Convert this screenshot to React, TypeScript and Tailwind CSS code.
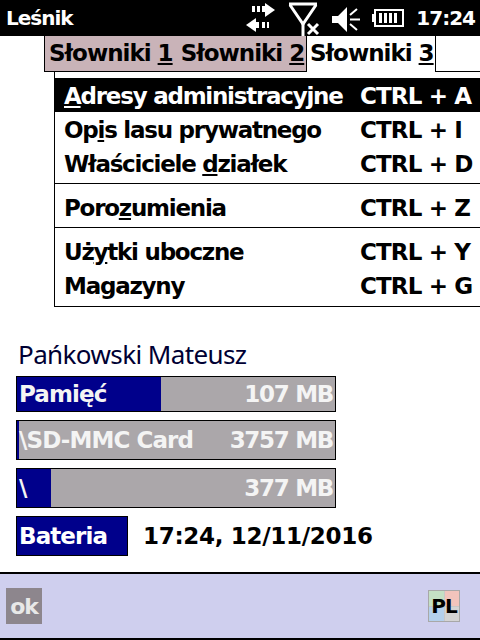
import React from 'react';

const font = { fontFamily: '"DejaVu Sans", sans-serif' };

const menu = [
  [
    { pre: '', key: 'A', post: 'dresy administracyjne', hot: 'A', active: true },
    { pre: 'Op', key: 'i', post: 's lasu prywatnego', hot: 'I' },
    { pre: 'Właściciele ', key: 'd', post: 'ziałek', hot: 'D' },
  ],
  [{ pre: 'Poro', key: 'z', post: 'umienia', hot: 'Z' }],
  [
    { pre: 'Uż', key: 'y', post: 'tki uboczne', hot: 'Y' },
    { pre: 'Ma', key: 'g', post: 'azyny', hot: 'G' },
  ],
];

const bars = [
  { label: 'Pamięć', value: '107 MB', fill: 'w-[144px]', height: 'h-[36px]' },
  { label: '\\SD-MMC Card', value: '3757 MB', fill: 'w-[2px]', height: 'h-[40px]' },
  { label: '\\', value: '377 MB', fill: 'w-[34px]', height: 'h-[40px]' },
];

const StatusIcons: React.FC = () => (
  <div className="flex items-start">
    <svg width="32" height="32" viewBox="0 0 32 32" className="mt-[2px] mr-[10px]" fill="#fff">
      <path d="M7 5h3v6H7zM12 5h3v6h-3zM17 5h3v6h-3z" transform="translate(0 -1)" />
      <path d="M20 1l10 7-10 7z" />
      <path d="M1 23l10-7v14z" />
      <path d="M11 20h3v6h-3zM17 20h3v6h-3zM22 20h2v6h-2z" />
    </svg>
    <svg width="34" height="34" viewBox="0 0 34 34" className="mt-[2px] mr-[11px]" fill="none" stroke="#fff">
      <path d="M2 2h28M3 3l13 19 13-19" strokeWidth="3" />
      <path d="M16 20v14" strokeWidth="3" />
      <path d="M21 22l10 10M31 22L21 32" strokeWidth="3" />
    </svg>
    <svg width="30" height="28" viewBox="0 0 30 28" className="mt-[6px] mr-[10px]" fill="#fff">
      <path d="M0 10h6l9-9v25l-9-9H0z" />
      <path d="M18 9l7-6M18 13.500h10M18 18l7 6" stroke="#fff" strokeWidth="2" fill="none" />
    </svg>
    <svg width="32" height="18" viewBox="0 0 32 18" className="mt-[9px] mr-[12px]" fill="#fff">
      <path d="M0 5h2v8H0z" />
      <path d="M3 1h28v16H3z" fill="none" stroke="#fff" strokeWidth="2" />
      <path d="M7 4h3v10H7zM12 4h3v10h-3zM17 4h3v10h-3zM22 4h3v10h-3z" />
    </svg>
  </div>
);

const App: React.FC = () => {
  return (
    <div className="w-[480px] h-[640px] bg-white flex flex-col overflow-hidden text-black font-bold" style={font}>
      {/* Status bar */}
      <div className="h-[36px] bg-black text-white flex items-center pl-[6px] pr-[5px] text-[20px] tracking-[-1px]">
        <span>Leśnik</span>
        <div className="ml-auto flex items-center">
          <StatusIcons />
          <span>17:24</span>
        </div>
      </div>

      {/* Tabs */}
      <div className="h-[36px] pl-[44px] flex text-[23px] tracking-[-1px] leading-[34px]">
        <div className="w-[263px] h-[36px] bg-[#c9b3b8] border-l border-b border-r border-black flex gap-[8px] pl-[4px] whitespace-nowrap">
          <span>
            Słowniki <u>1</u>
          </span>
          <span>
            Słowniki <u>2</u>
          </span>
        </div>
        <div className="w-[129px] h-[36px] border-r border-black pl-[3px] whitespace-nowrap">
          Słowniki <u>3</u>
        </div>
        <div className="flex-1 h-[36px] border-b border-black" />
      </div>

      {/* Menu */}
      <div className="ml-[54px] w-[426px] h-[235px] border-l border-b border-black pt-[6px] text-[23px] tracking-[-1.25px]">
        {menu.map((group, i) => (
          <div key={i} className={i > 0 ? 'border-t border-black mt-[3px] pt-[6px]' : ''}>
            {group.map((item) => (
              <div
                key={item.hot}
                className={`h-[34px] flex items-center justify-between pl-[9px] pr-[7px] pt-[2px] ${
                  item.active ? 'bg-black text-white' : ''
                }`}
              >
                <span>
                  {item.pre}
                  <u>{item.key}</u>
                  {item.post}
                </span>
                <span className="w-[113px] whitespace-nowrap tracking-[-0.85px]">CTRL + {item.hot}</span>
              </div>
            ))}
          </div>
        ))}
      </div>

      {/* Name */}
      <div
        className="mt-[29px] pl-[18px] h-[36px] text-[26px] leading-[36px] font-normal text-[#000033] tracking-[-0.6px]"
        style={{ fontFamily: '"Noto Sans", sans-serif' }}
      >
        Pańkowski Mateusz
      </div>

      {/* Storage bars */}
      <div className="mt-[4px] ml-[16px] w-[320px] flex flex-col gap-[8px] text-[23px] tracking-[-0.9px] text-[#f4f4f4]">
        {bars.map((bar) => (
          <div
            key={bar.label}
            className={`${bar.height} relative bg-[#aba7aa] border border-black flex items-center justify-between pl-[2px] pr-[2px]`}
          >
            <div className={`absolute left-0 top-0 bottom-0 ${bar.fill} bg-[#00008b]`} />
            <span className="relative">{bar.label}</span>
            <span className="relative tracking-[-1.3px]">{bar.value}</span>
          </div>
        ))}
        <div className="flex items-center h-[40px] whitespace-nowrap">
          <div className="w-[112px] shrink-0 h-[40px] bg-[#00008b] border border-black text-white flex items-center px-[2px]">
            Bateria
          </div>
          <span className="ml-[15px] text-black tracking-[-0.3px]">17:24, 12/11/2016</span>
        </div>
      </div>

      {/* Bottom bar */}
      <div className="mt-auto h-[68px] bg-[#cfcfee] border-t-2 border-b-2 border-black flex items-center justify-between pl-[6px] pr-[20px]">
        <div className="w-[36px] h-[36px] bg-[#8d868d] text-[#e8e8e8] text-[22px] flex items-center justify-center tracking-[-1px]">
          ok
        </div>
        <div className="relative w-[32px] h-[32px] border border-[#a8a8a8] grid grid-cols-2 gap-px bg-[#c8c8c8]">
          <div className="bg-[#c4e0c4]" />
          <div className="bg-[#f2c4bc]" />
          <div className="bg-[#b4d0ec]" />
          <div className="bg-[#d4d4d4]" />
          <span className="absolute inset-0 flex items-center justify-center text-[20px] tracking-[-1px] text-black">PL</span>
        </div>
      </div>
    </div>
  );
};

export default App;
